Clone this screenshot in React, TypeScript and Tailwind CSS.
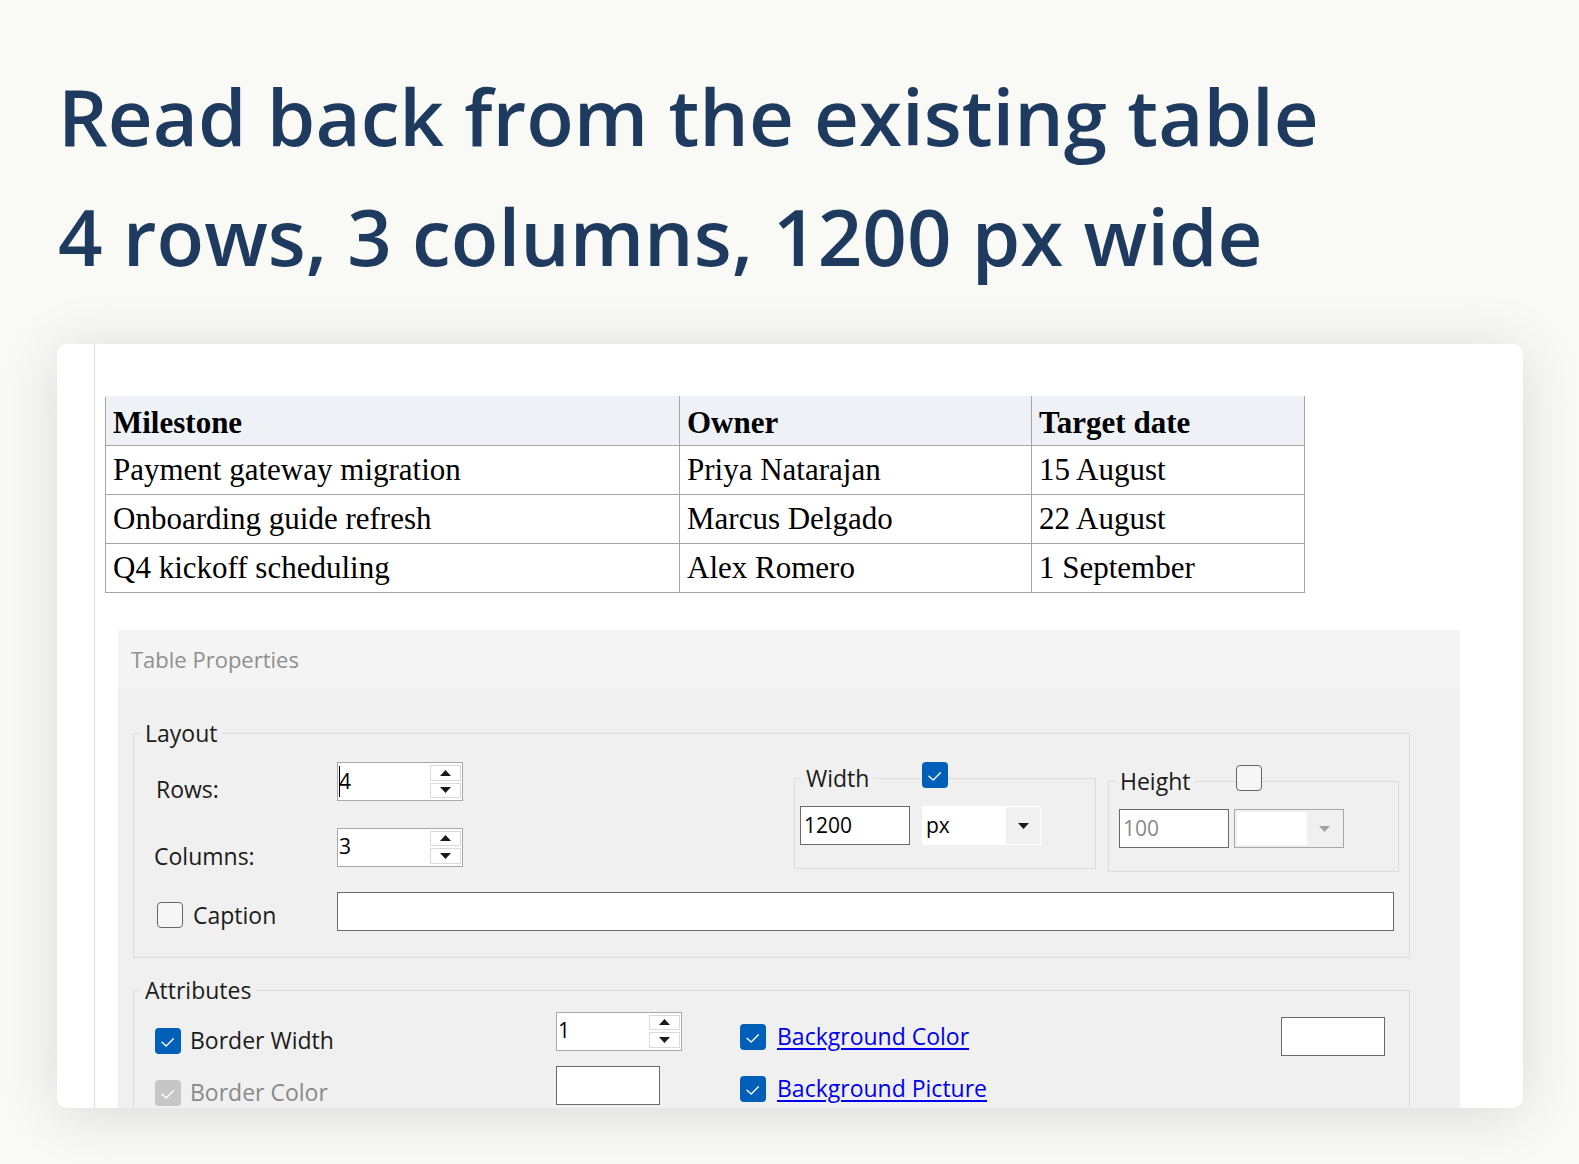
import React from 'react';

type CheckState = 'on' | 'off' | 'disabled';

function Check({ state }: { state: CheckState }) {
  if (state === 'off') {
    return <span className="block h-[26px] w-[26px] shrink-0 rounded-[4px] border-[1.5px] border-[#666666] bg-[#f6f6f6]" />;
  }
  return (
    <span
      className={
        'flex h-[26px] w-[26px] shrink-0 items-center justify-center rounded-[4px] ' +
        (state === 'on' ? 'bg-[#005fb8]' : 'bg-[#c6c6c6]')
      }
    >
      <svg viewBox="0 0 26 26" className="h-[26px] w-[26px]" fill="none" stroke="white" strokeWidth="1.4" strokeLinecap="round" strokeLinejoin="round">
        <path d="M7 14.3L11.2 18L18.4 10.8" />
      </svg>
    </span>
  );
}

function Tri({ up, color = '#1a1a1a' }: { up?: boolean; color?: string }) {
  return (
    <svg viewBox="0 0 11 6" className="h-[6px] w-[11px]">
      <path d={up ? 'M0 6L5.5 0L11 6Z' : 'M0 0L11 0L5.5 6Z'} fill={color} />
    </svg>
  );
}

function Spin({ value, caret }: { value: string; caret?: boolean }) {
  return (
    <div className="flex h-[39px] w-[126px] shrink-0 border border-[#a9a9a9] bg-white">
      <div className="relative flex flex-1 items-center pl-[1px] text-[21px] text-black">
        {caret && <span className="absolute left-[1px] top-[3px] h-[31px] w-px bg-black" />}
        <span>{value}</span>
      </div>
      <div className="flex w-[32px] flex-col gap-[2px] py-[2px] pr-[1px]">
        <span className="flex flex-1 items-center justify-center border border-[#dadada] bg-white">
          <Tri up />
        </span>
        <span className="flex flex-1 items-center justify-center border border-[#dadada] bg-white">
          <Tri />
        </span>
      </div>
    </div>
  );
}

function TextBox({ value, w, muted }: { value?: string; w: string; muted?: boolean }) {
  return (
    <div className={'flex h-[39px] shrink-0 items-center border border-[#6a6a6a] bg-white pl-[3px] text-[21px] ' + w + (muted ? ' text-[#8a8a8a]' : ' text-black')}>
      {value}
    </div>
  );
}

const rows = [
  ['Payment gateway migration', 'Priya Natarajan', '15 August'],
  ['Onboarding guide refresh', 'Marcus Delgado', '22 August'],
  ['Q4 kickoff scheduling', 'Alex Romero', '1 September'],
];

function MilestoneTable() {
  return (
    <table className="w-[1200px] table-fixed border-collapse font-['Liberation_Serif','Times_New_Roman',serif] text-[31px] leading-[36px] text-black">
      <colgroup>
        <col className="w-[574px]" />
        <col className="w-[352px]" />
        <col />
      </colgroup>
      <thead>
        <tr className="h-[49px] bg-[#eef2f6]">
          {['Milestone', 'Owner', 'Target date'].map((h) => (
            <th key={h} className="border border-[#a6a6a6] border-t-[#eef2f6] pl-[7px] pt-[3px] text-left font-bold">
              {h}
            </th>
          ))}
        </tr>
      </thead>
      <tbody>
        {rows.map((r) => (
          <tr key={r[0]} className="h-[49px]">
            {r.map((c) => (
              <td key={c} className="border border-[#a6a6a6] pl-[7px] font-normal">
                {c}
              </td>
            ))}
          </tr>
        ))}
      </tbody>
    </table>
  );
}

function SizeGroup({ label, checked, value, disabled, pad }: { label: string; checked: boolean; value: string; disabled?: boolean; pad: string }) {
  return (
    <div className="relative">
      <fieldset className="border border-[#dcdcdc] pb-[23px]">
        <legend className="ml-[6px] px-[5px] text-[23px] leading-[31px]">{label}</legend>
        <div className={'mt-[12px] flex items-center ' + pad}>
          <TextBox value={value} w="w-[110px]" muted={disabled} />
          {disabled ? (
            <div className="ml-[5px] flex h-[39px] w-[110px] border border-[#a7a7a7] bg-[#f0f0f0] p-[2px]">
              <span className="w-[70px] bg-white" />
              <span className="flex flex-1 items-center justify-center">
                <Tri color="#a0a0a0" />
              </span>
            </div>
          ) : (
            <div className="ml-[12px] flex h-[39px] w-[119px] border border-white bg-white">
              <span className="flex flex-1 items-center pl-[3px] text-[21px] text-black">px</span>
              <span className="flex w-[34px] items-center justify-center bg-[#f0f0f0]">
                <Tri />
              </span>
            </div>
          )}
        </div>
      </fieldset>
      <span className="absolute left-[128px] top-[-1px]">
        <Check state={checked ? 'on' : 'off'} />
      </span>
    </div>
  );
}

function TableProperties() {
  return (
    <div className="ml-[13px] mt-[37px] w-[1342px] bg-[#f0f0f0] text-[23px] text-[#1b1b1b]">
      <div className="h-[58px] bg-[#f4f4f4] pl-[13px] text-[22px] leading-[58px] text-[#8f8f8f]">Table Properties</div>
      <div className="pl-[15px] pr-[50px] pt-[30px] pb-[60px]">
        <fieldset className="border border-[#dcdcdc] pb-[24px]">
          <legend className="ml-[6px] px-[5px] leading-[31px]">Layout</legend>
          <div className="mt-[13px] flex items-start">
            <div className="w-[329px] pl-[22px]">
              <div className="flex items-start">
                <span className="mt-[10px] w-[181px]">Rows:</span>
                <Spin value="4" caret />
              </div>
              <div className="mt-[21px] flex items-start">
                <span className="-ml-[2px] mt-[11px] w-[183px]">Columns:</span>
                <Spin value="3" />
              </div>
            </div>
            <div className="ml-[331px] mt-[1px] w-[302px]">
              <SizeGroup label="Width" checked value="1200" pad="pl-[5px]" />
            </div>
            <div className="ml-[12px] mt-[4px] w-[291px]">
              <SizeGroup label="Height" checked={false} value="100" disabled pad="pl-[10px]" />
            </div>
          </div>
          <div className="mt-[19px] flex items-start">
            <div className="flex w-[203px] items-center pl-[23px] pt-[6px]">
              <Check state="off" />
              <span className="ml-[10px]">Caption</span>
            </div>
            <TextBox w="w-[1057px]" />
          </div>
        </fieldset>

        <fieldset className="mt-[17px] border border-[#dcdcdc] pb-[40px]">
          <legend className="ml-[6px] px-[5px] leading-[31px]">Attributes</legend>
          <div className="mt-[6px] flex h-[54px] items-start">
            <div className="mt-[16px] flex h-[26px] w-[422px] items-center pl-[21px]">
              <Check state="on" />
              <span className="ml-[9px]">Border Width</span>
            </div>
            <Spin value="1" />
            <div className="ml-[58px] mt-[12px] flex h-[26px] w-[541px] items-center">
              <Check state="on" />
              <a className="ml-[11px] text-[#0000ee] underline underline-offset-[3px]">Background Color</a>
            </div>
            <div className="mt-[5px]">
              <TextBox w="w-[104px]" />
            </div>
          </div>
          <div className="flex h-[54px] items-start">
            <div className="mt-[14px] flex h-[26px] w-[422px] items-center pl-[21px] text-[#8a8a8a]">
              <Check state="disabled" />
              <span className="ml-[9px]">Border Color</span>
            </div>
            <TextBox w="w-[104px]" />
            <div className="ml-[80px] mt-[10px] flex h-[26px] items-center">
              <Check state="on" />
              <a className="ml-[11px] text-[#0000ee] underline underline-offset-[3px]">Background Picture</a>
            </div>
          </div>
        </fieldset>
      </div>
    </div>
  );
}

export default function App() {
  return (
    <div className="min-h-screen overflow-hidden bg-[#f9f9f6] pb-[60px] font-['Open_Sans','Noto_Sans',sans-serif]">
      <h1 className="pl-[58px] pt-[56px] text-[78px] font-semibold leading-[120px] text-[#1e3a5f]">
        Read back from the existing table
        <br />4 rows, 3 columns, 1200 px wide
      </h1>
      <div className="ml-[57px] mt-[48px] flex h-[764px] w-[1466px] overflow-hidden rounded-[10px] bg-white shadow-[0_6px_60px_rgba(0,0,0,0.13)]">
        <div className="w-[38px] shrink-0 border-r border-[#dedad6]" />
        <div className="flex-1 pl-[10px] pt-[52px]">
          <MilestoneTable />
          <TableProperties />
        </div>
      </div>
    </div>
  );
}
